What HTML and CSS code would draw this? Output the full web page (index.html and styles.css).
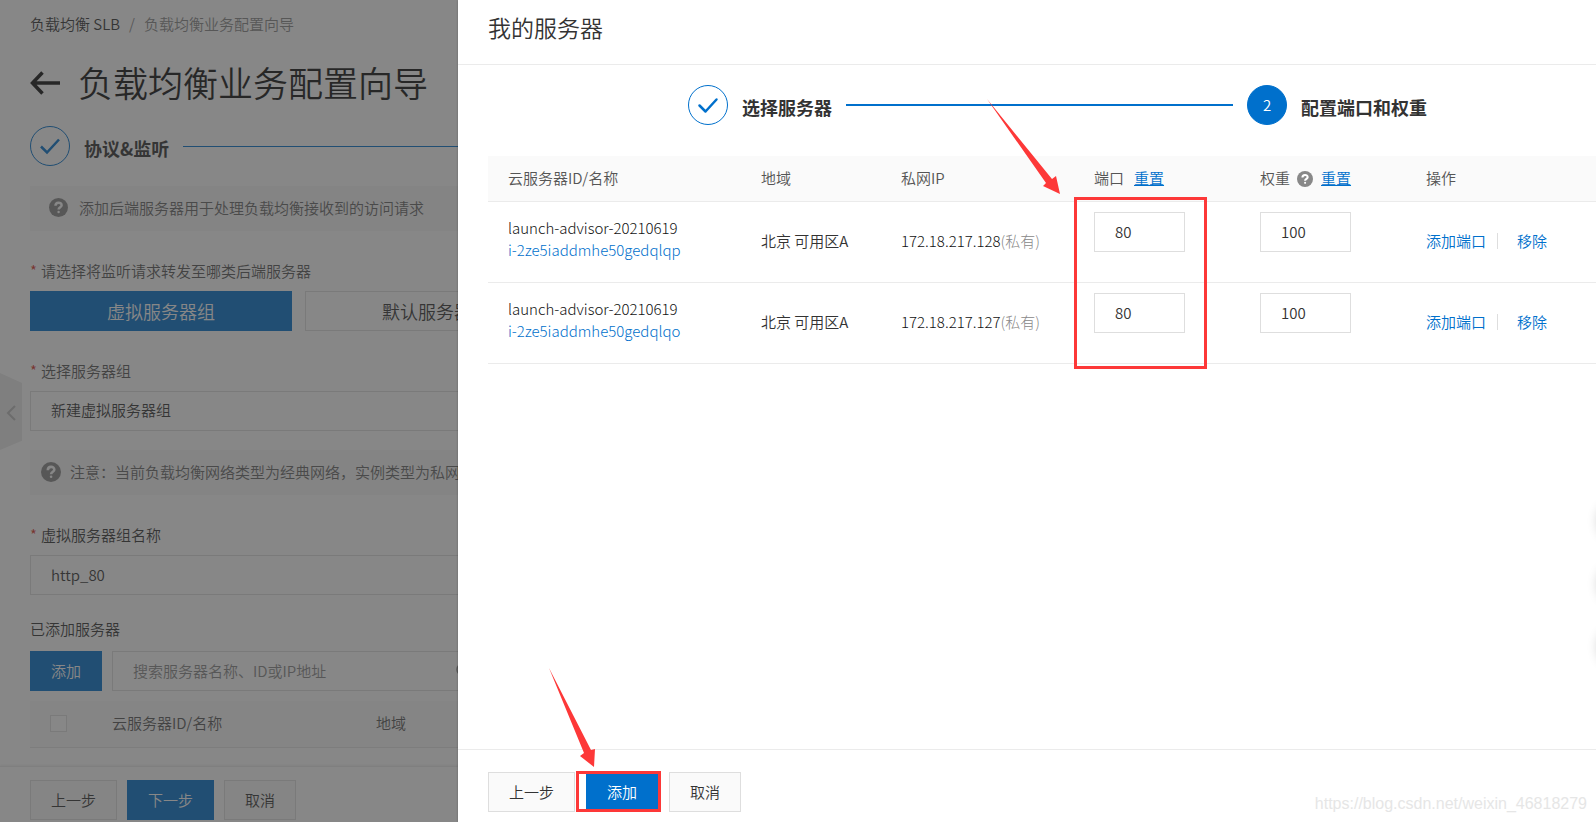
FILE: index.html
```html
<!DOCTYPE html>
<html lang="zh-CN">
<head>
<meta charset="utf-8">
<title>负载均衡业务配置向导</title>
<link rel="stylesheet" href="styles.css">
</head>
<body>
<div class="page">
  <main class="wizard">
    <nav class="crumbs"><a href="#">负载均衡 SLB</a><span class="slash">/</span><span>负载均衡业务配置向导</span></nav>
    <header class="heading">
      <a class="back" href="#" aria-label="返回"><svg width="30" height="24" viewBox="0 0 30 24"><path d="M12.500 1.500 2.500 12 12.500 22.500M2.500 12H30" fill="none" stroke="currentColor" stroke-width="3.500"/></svg></a>
      <h1>负载均衡业务配置向导</h1>
    </header>
    <div class="progress">
      <span class="dot"><svg width="22" height="22" viewBox="0 0 22 22"><path d="M2 11.500 8 17.500 20 4.500" fill="none" stroke="currentColor" stroke-width="2.500"/></svg></span>
      <strong>协议&amp;监听</strong>
      <span class="rail"></span>
    </div>
    <p class="notice notice-wide"><svg class="q" width="19" height="19" viewBox="0 0 20 20"><circle cx="10" cy="10" r="10"/><path d="M6.800 8.200c0-4.300 6.500-4.300 6.500-.500 0 2-3.200 2.200-3.200 4.500"/><circle class="pt" cx="10.100" cy="14.800" r="1.300"/></svg>添加后端服务器用于处理负载均衡接收到的访问请求</p>

    <p class="label label-first"><i>*</i>请选择将监听请求转发至哪类后端服务器</p>
    <div class="choices">
      <button class="choice chosen" type="button">虚拟服务器组</button>
      <button class="choice" type="button">默认服务器组</button>
    </div>
    <label class="label label-group" for="group"><i>*</i>选择服务器组</label>
    <select class="field" id="group"><option>新建虚拟服务器组</option></select>
    <p class="notice notice-tight"><svg class="q" width="20" height="20" viewBox="0 0 20 20"><circle cx="10" cy="10" r="10"/><path d="M6.800 8.200c0-4.300 6.500-4.300 6.500-.500 0 2-3.200 2.200-3.200 4.500"/><circle class="pt" cx="10.100" cy="14.800" r="1.300"/></svg>注意：当前负载均衡网络类型为经典网络，实例类型为私网</p>
    <label class="label label-name" for="gname"><i>*</i>虚拟服务器组名称</label>
    <input class="field" id="gname" type="text" value="http_80">
    <p class="label label-added">已添加服务器</p>
    <div class="search">
      <button class="btn primary" type="button">添加</button>
      <div class="search-box">
        <input class="field" type="text" placeholder="搜索服务器名称、ID或IP地址" aria-label="搜索服务器">
        <svg class="lens" width="16" height="16" viewBox="0 0 16 16"><circle cx="6.500" cy="6.500" r="5.500" fill="none" stroke="currentColor" stroke-width="1.500"/><path d="M10.500 10.500 15 15" stroke="currentColor" stroke-width="1.500"/></svg>
      </div>
    </div>
    <table class="added">
      <tr><th class="pick"><input type="checkbox" aria-label="全选"></th><th class="who">云服务器ID/名称</th><th>地域</th></tr>
    </table>
  </main>
  <footer class="actions page-actions">
    <button class="btn" type="button">上一步</button>
    <button class="btn primary" type="button">下一步</button>
    <button class="btn" type="button">取消</button>
  </footer>
  <button class="handle" type="button" aria-label="收起"><svg width="10" height="16" viewBox="0 0 10 16"><path d="M9 1 2 8l7 7" fill="none" stroke="currentColor" stroke-width="2"/></svg></button>
</div>
<div class="mask"></div>

<section class="drawer">
  <header class="drawer-head"><h2>我的服务器</h2></header>
  <div class="drawer-body">
    <div class="steps">
      <span class="dot"><svg width="22" height="22" viewBox="0 0 22 22"><path d="M2.500 11.500 8.500 17.500 19.500 5.500" fill="none" stroke="currentColor" stroke-width="2.500" stroke-linecap="round" stroke-linejoin="round"/></svg></span>
      <strong>选择服务器</strong>
      <span class="rail"></span>
      <span class="dot current">2</span>
      <strong>配置端口和权重</strong>
    </div>
    <table class="servers">
      <colgroup><col class="c-name"><col class="c-zone"><col class="c-ip"><col class="c-num"><col class="c-num"><col></colgroup>
      <thead>
        <tr>
          <th>云服务器ID/名称</th><th>地域</th><th>私网IP</th>
          <th><div class="th">端口<a href="#">重置</a></div></th>
          <th><div class="th th-q">权重<svg class="q" width="16" height="16" viewBox="0 0 20 20"><circle cx="10" cy="10" r="10"/><path d="M6.800 8.200c0-4.300 6.500-4.300 6.500-.500 0 2-3.200 2.200-3.200 4.500"/><circle class="pt" cx="10.100" cy="14.800" r="1.300"/></svg><a href="#">重置</a></div></th>
          <th>操作</th>
        </tr>
      </thead>
      <tbody>
        <tr>
          <td class="name">launch-advisor-20210619<br><a href="#">i-2ze5iaddmhe50gedqlqp</a></td>
          <td>北京 可用区A</td>
          <td class="ip">172.18.217.128<span class="dim">(私有)</span></td>
          <td class="num"><input type="text" value="80" aria-label="端口"></td>
          <td class="num"><input type="text" value="100" aria-label="权重"></td>
          <td><div class="ops"><a href="#">添加端口</a><a href="#">移除</a></div></td>
        </tr>
        <tr>
          <td class="name">launch-advisor-20210619<br><a href="#">i-2ze5iaddmhe50gedqlqo</a></td>
          <td>北京 可用区A</td>
          <td class="ip">172.18.217.127<span class="dim">(私有)</span></td>
          <td class="num"><input type="text" value="80" aria-label="端口"></td>
          <td class="num"><input type="text" value="100" aria-label="权重"></td>
          <td><div class="ops"><a href="#">添加端口</a><a href="#">移除</a></div></td>
        </tr>
      </tbody>
    </table>
  </div>
  <footer class="actions drawer-actions">
    <button class="btn" type="button">上一步</button>
    <button class="btn primary" type="button">添加</button>
    <button class="btn" type="button">取消</button>
  </footer>
</section>

<div class="floaters"><span></span><span></span><span></span></div>
<svg class="marks" width="1596" height="822" viewBox="0 0 1596 822">
  <g fill="none" stroke="#fd3838" stroke-width="3">
    <rect x="1075.500" y="198.500" width="130" height="169"/>
    <rect x="577.500" y="772.500" width="82" height="38"/>
  </g>
  <g fill="#fd3838">
    <path d="M987 99 1052 179 1056 176 1060 194 1043 186 1046 183Z"/>
    <path d="M549 668 591 750 595 749 594 767 580 756 584 753Z"/>
  </g>
</svg>
<p class="watermark">https://blog.csdn.net/weixin_46818279</p>
</body>
</html>
```
FILE: styles.css
```css
* { box-sizing: border-box; }
html, body { height: 100%; }
body {
  margin: 0;
  overflow: hidden;
  color: #333;
  font: 350 15px/22px "Noto Sans CJK SC", "Noto Sans", sans-serif;
}
h1, h2, p { margin: 0; font-weight: 350; }
button, input, select { font: inherit; color: inherit; border-radius: 0; margin: 0; }
a { color: #0070cc; text-decoration: none; }
svg { display: block; flex: none; }
strong { font-size: 18px; font-weight: 700; }

.page { display: flex; flex-direction: column; height: 100vh; background: #fff; }
.wizard { flex: 1; min-height: 0; overflow: hidden; padding: 13px 30px 0; }
.crumbs { display: flex; color: #888; }
.crumbs a { color: #333; }
.slash { margin: 0 9px; }
.heading { display: flex; align-items: center; gap: 18px; height: 50px; margin-top: 23px; }
.back { color: #111; }
h1 { padding-bottom: 2px; font-size: 35px; line-height: 48px; color: #111; white-space: nowrap; }

.progress, .steps { display: flex; align-items: center; gap: 14px; white-space: nowrap; }
.progress { margin-top: 18px; }
.dot {
  display: flex; align-items: center; justify-content: center; flex: none;
  width: 40px; height: 40px;
  border: 1px solid #0070cc; border-radius: 50%;
  color: #0070cc;
}
.dot.current { background: #0070cc; color: #fff; }
.progress strong, .steps strong { padding-top: 3px; }
.rail { flex: 1; height: 1px; background: #0070cc; }
.steps .rail { height: 2px; }

.notice { display: flex; align-items: center; height: 45px; padding-bottom: 2px; background: #f7f7f7; color: #666; white-space: nowrap; }
.notice-wide { margin-top: 20px; padding-left: 19px; gap: 11px; }
.notice-tight { margin-top: 19px; padding-left: 11px; gap: 9px; }
.q circle { fill: #888; }
.q path { fill: none; stroke: #fff; stroke-width: 2.600px; }
.q .pt { fill: #fff; }

.label { display: block; color: #555; }
.label i { color: #d93026; font-style: normal; margin-right: 4px; }
.label-first { margin: 29px 0 9px; }
.label-group { margin: 29px 0 9px; }
.label-name { margin: 29px 0 9px; color: #333; }
.label-added { margin: 23px 0 11px; color: #333; }
.choices { display: flex; gap: 13px; }
.choice { width: 262px; height: 40px; padding: 0; border: 1px solid #dedede; background: #fff; font-size: 18px; }
.chosen { background: #0070cc; border-color: #0070cc; color: #fff; }
.field {
  display: block; width: 100%; height: 40px; padding: 0 20px 2px;
  border: 1px solid #dedede; background: #fff; appearance: none;
}
.field::placeholder { color: #888; opacity: 1; }
.search { display: flex; gap: 10px; }
.search .btn { flex: none; }
.search-box { position: relative; flex: 1; }
.lens { position: absolute; left: 344px; top: 12px; color: #888; }
.added { width: 100%; margin-top: 10px; border-collapse: collapse; table-layout: fixed; background: #f9f9f9; }
.added th { height: 46px; padding: 0 0 2px; border-bottom: 1px solid #e5e5e5; text-align: left; font-weight: 350; color: #555; }
.added .pick { width: 82px; padding: 0 0 0 20px; }
.added .who { width: 264px; }
.pick input { display: block; appearance: none; width: 17px; height: 17px; border: 1px solid #dedede; background: #fff; }

.actions { display: flex; gap: 10px; border-top: 1px solid #ebebeb; background: #fff; }
.btn { height: 40px; padding: 0 20px 1px; border: 1px solid #dedede; background: #fafafa; white-space: nowrap; }
.btn.primary { background: #0070cc; border-color: #0070cc; color: #fff; }
.page-actions { height: 56px; padding: 13px 30px 0; box-shadow: 0 -1px 2px #0001; }
.handle {
  position: absolute; left: 0; top: 373px; width: 22px; height: 77px; padding: 2px 0 0 6px;
  border: 0; background: #ebebeb; color: #bbb;
  clip-path: polygon(0 0, 100% 13%, 100% 88%, 0 100%);
}
.mask { position: absolute; inset: 0; background: rgba(55, 55, 55, .6); }

.drawer {
  position: absolute; inset: 0 0 0 458px;
  display: flex; flex-direction: column;
  background: #fff; box-shadow: 0 0 2px #0004;
}
.drawer-head { height: 65px; padding: 11px 30px; border-bottom: 1px solid #ebebeb; }
h2 { font-size: 23px; line-height: 32px; }
.drawer-body { flex: 1; padding: 20px 0 0 30px; }
.steps { padding: 0 169px 0 200px; }
.servers { width: 100%; margin-top: 31px; border-collapse: collapse; table-layout: fixed; }
.c-name { width: 253px; }
.c-zone { width: 140px; }
.c-ip { width: 193px; }
.c-num { width: 166px; }
.servers th { height: 45px; padding: 0 0 1px 20px; text-align: left; font-weight: 350; color: #555; background: #fafafa; }
.servers td { height: 81px; padding: 0 0 2px 20px; }
.servers th, .servers td { border-bottom: 1px solid #ebebeb; white-space: nowrap; }
.servers .name { padding-bottom: 6px; }
.servers .name, .servers .ip { font-weight: 300; color: #111; }
.servers .num { padding-top: 10px; vertical-align: top; }
.num input { display: block; width: 91px; height: 40px; padding: 0 20px; border: 1px solid #dedede; }
.th { display: flex; align-items: center; gap: 10px; }
.th a { text-decoration: underline; text-underline-offset: 1px; }
.th-q { gap: 7px; }
.th-q svg { margin-top: 3px; }
.th-q a { margin-left: 1px; }
.servers .dim { color: #888; }
.ops { display: flex; align-items: center; }
.ops a + a { margin-left: 11px; padding-left: 19px; border-left: 1px solid #dedede; line-height: 16px; }
.drawer-actions { height: 73px; padding: 22px 30px 0; gap: 11px; }

.floaters { position: absolute; right: -42px; top: 501px; display: grid; gap: 23px; }
.floaters span { width: 40px; height: 40px; border-radius: 50%; background: #fff; box-shadow: 0 0 12px #0003; }
.marks { position: absolute; left: 0; top: 0; pointer-events: none; }
.watermark { position: absolute; right: 9px; bottom: 7px; font: 16px/22px "Liberation Sans", sans-serif; color: #e6e6e6; }
```
